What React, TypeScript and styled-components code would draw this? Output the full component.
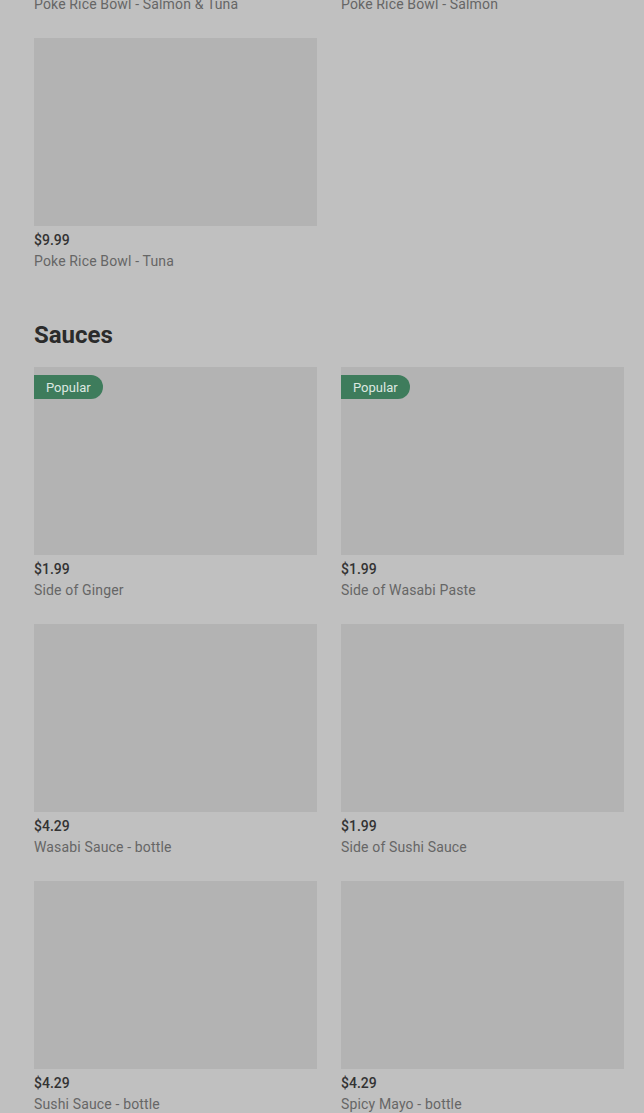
import React from "react";
import styled, { createGlobalStyle } from "styled-components";

const Global = createGlobalStyle`
  html, body { margin: 0; padding: 0; background: #c0c0c0; }
  body { font-family: Roboto, "Liberation Sans", sans-serif; overflow: hidden; }
`;

const Page = styled.div`
  padding: 0 20px 0 34px;
  margin-top: -219px;
`;

const Section = styled.section`
  & + & { margin-top: 48px; }
`;

const Title = styled.h2`
  margin: 0 0 16px;
  font-size: 24px;
  line-height: 32px;
  font-weight: 700;
  color: #2b2b2b;
  letter-spacing: 0;
`;

const Grid = styled.div`
  display: grid;
  grid-template-columns: 283px 283px;
  column-gap: 24px;
  row-gap: 24px;
`;

const Card = styled.div`
  display: flex;
  flex-direction: column;
`;

const Thumb = styled.div`
  position: relative;
  height: 188px;
  background: #b3b3b3;
`;

const Badge = styled.span`
  position: absolute;
  top: 8px;
  left: 0;
  height: 24px;
  padding: 0 12px;
  display: flex;
  align-items: center;
  background: #3e7c5c;
  color: #dde8e1;
  font-size: 13px;
  border-radius: 0 12px 12px 0;
`;

const Price = styled.div`
  margin-top: 6px;
  font-size: 14px;
  line-height: 16px;
  font-weight: 500;
  color: #333;
`;

const Name = styled.div`
  margin-top: 3px;
  font-size: 14px;
  line-height: 20px;
  letter-spacing: 0.15px;
  color: #666;
`;

type Item = { name: string; price?: string; popular?: boolean };

const bowls: Item[] = [
  { name: "Poke Rice Bowl - Salmon & Tuna", price: "$11.99" },
  { name: "Poke Rice Bowl - Salmon", price: "$10.99" },
  { name: "Poke Rice Bowl - Tuna", price: "$9.99" },
];

const sauces: Item[] = [
  { name: "Side of Ginger", price: "$1.99", popular: true },
  { name: "Side of Wasabi Paste", price: "$1.99", popular: true },
  { name: "Wasabi Sauce - bottle", price: "$4.29" },
  { name: "Side of Sushi Sauce", price: "$1.99" },
  { name: "Sushi Sauce - bottle", price: "$4.29" },
  { name: "Spicy Mayo - bottle", price: "$4.29" },
];

const ItemCard = ({ item }: { item: Item }) => (
  <Card>
    <Thumb>{item.popular && <Badge>Popular</Badge>}</Thumb>
    <Price>{item.price}</Price>
    <Name>{item.name}</Name>
  </Card>
);

export default function App() {
  return (
    <>
      <Global />
      <Page>
        <Section>
          <Grid>
            {bowls.map((b) => (
              <ItemCard key={b.name} item={b} />
            ))}
          </Grid>
        </Section>
        <Section>
          <Title>Sauces</Title>
          <Grid>
            {sauces.map((s) => (
              <ItemCard key={s.name} item={s} />
            ))}
          </Grid>
        </Section>
      </Page>
    </>
  );
}
